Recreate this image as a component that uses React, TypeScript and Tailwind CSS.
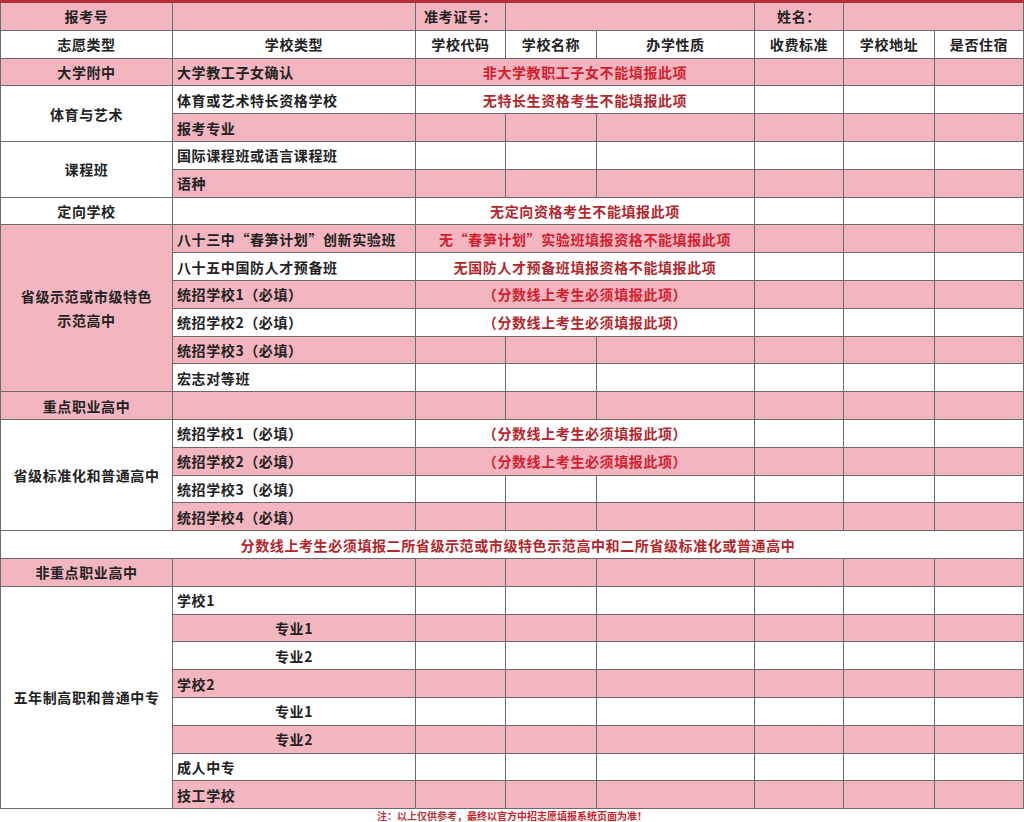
import React from 'react';

const PINK = 'bg-[#f3b6c0]';
const WHITE = 'bg-white';

type CellProps = {
  className?: string;
  pink?: boolean;
  left?: boolean;
  red?: boolean;
  children?: React.ReactNode;
};

function Cell({ className = '', pink, left, red, children }: CellProps) {
  const tone = red ? (pink ? 'text-[#d3202e]' : 'text-[#b3262c]') : 'text-[#222]';
  return (
    <div
      className={`flex items-center ${left ? 'justify-start pl-[4px]' : 'justify-center text-center'} ${pink ? PINK : WHITE} ${tone} ${className}`}
    >
      {children}
    </div>
  );
}

// six empty cells for the columns after 学校类型
function Blanks({ pink, n = 6 }: { pink?: boolean; n?: number }) {
  return (
    <>
      {Array.from({ length: n }).map((_, i) => (
        <Cell key={i} pink={pink} />
      ))}
    </>
  );
}

// red notice spanning 学校代码..办学性质, then three empty cells
function Notice({ pink, text }: { pink?: boolean; text: string }) {
  return (
    <>
      <Cell pink={pink} red className="col-span-3">{text}</Cell>
      <Blanks pink={pink} n={3} />
    </>
  );
}

export default function App() {
  return (
    <div className="w-[1024px] h-[822px] bg-white font-['Noto_Sans_CJK_SC',sans-serif] text-[14px] font-semibold tracking-[0.6px] leading-none overflow-hidden">
      <div className="h-[3px] bg-[#b7303a]" />
      <div className="grid grid-cols-[171px_242px_89px_90px_157px_88px_90px_88px] grid-rows-[repeat(29,26.8px)] gap-px px-px pb-px bg-[#6a6a6a]">
        {/* row 0 */}
        <Cell pink>报考号</Cell>
        <Cell pink />
        <Cell pink>准考证号：</Cell>
        <Cell pink className="col-span-2" />
        <Cell pink>姓名：</Cell>
        <Cell pink className="col-span-2" />

        {/* header */}
        <Cell>志愿类型</Cell>
        <Cell>学校类型</Cell>
        <Cell>学校代码</Cell>
        <Cell>学校名称</Cell>
        <Cell>办学性质</Cell>
        <Cell>收费标准</Cell>
        <Cell>学校地址</Cell>
        <Cell>是否住宿</Cell>

        <Cell pink>大学附中</Cell>
        <Cell pink left>大学教工子女确认</Cell>
        <Notice pink text="非大学教职工子女不能填报此项" />

        <Cell className="row-span-2">体育与艺术</Cell>
        <Cell left>体育或艺术特长资格学校</Cell>
        <Notice text="无特长生资格考生不能填报此项" />
        <Cell pink left>报考专业</Cell>
        <Blanks pink />

        <Cell className="row-span-2">课程班</Cell>
        <Cell left>国际课程班或语言课程班</Cell>
        <Blanks />
        <Cell pink left>语种</Cell>
        <Blanks pink />

        <Cell>定向学校</Cell>
        <Cell />
        <Notice text="无定向资格考生不能填报此项" />

        <Cell pink className="row-span-6 flex-col leading-[24px]">
          <span>省级示范或市级特色</span>
          <span>示范高中</span>
        </Cell>
        <Cell pink left>八十三中“春笋计划”创新实验班</Cell>
        <Notice pink text="无“春笋计划”实验班填报资格不能填报此项" />
        <Cell left>八十五中国防人才预备班</Cell>
        <Notice text="无国防人才预备班填报资格不能填报此项" />
        <Cell pink left>统招学校1（必填）</Cell>
        <Notice pink text="（分数线上考生必须填报此项）" />
        <Cell left>统招学校2（必填）</Cell>
        <Notice text="（分数线上考生必须填报此项）" />
        <Cell pink left>统招学校3（必填）</Cell>
        <Blanks pink />
        <Cell left>宏志对等班</Cell>
        <Blanks />

        <Cell pink>重点职业高中</Cell>
        <Cell pink />
        <Blanks pink />

        <Cell className="row-span-4">省级标准化和普通高中</Cell>
        <Cell left>统招学校1（必填）</Cell>
        <Notice text="（分数线上考生必须填报此项）" />
        <Cell pink left>统招学校2（必填）</Cell>
        <Notice pink text="（分数线上考生必须填报此项）" />
        <Cell left>统招学校3（必填）</Cell>
        <Blanks />
        <Cell pink left>统招学校4（必填）</Cell>
        <Blanks pink />

        <Cell red className="col-span-8 pl-[12px]">
          分数线上考生必须填报二所省级示范或市级特色示范高中和二所省级标准化或普通高中
        </Cell>

        <Cell pink>非重点职业高中</Cell>
        <Cell pink />
        <Blanks pink />

        <Cell className="row-span-8">五年制高职和普通中专</Cell>
        <Cell left>学校1</Cell>
        <Blanks />
        <Cell pink>专业1</Cell>
        <Blanks pink />
        <Cell>专业2</Cell>
        <Blanks />
        <Cell pink left>学校2</Cell>
        <Blanks pink />
        <Cell>专业1</Cell>
        <Blanks />
        <Cell pink>专业2</Cell>
        <Blanks pink />
        <Cell left>成人中专</Cell>
        <Blanks />
        <Cell pink left>技工学校</Cell>
        <Blanks pink />
      </div>
      <p className="text-center text-[10px] leading-[13px] font-bold tracking-normal">
        <span className="text-[#b33a3a]">注：以上仅供参考，</span>
        <span className="text-[#c8202c]">最终以官方中招志愿填报系统页面为准！</span>
      </p>
    </div>
  );
}
